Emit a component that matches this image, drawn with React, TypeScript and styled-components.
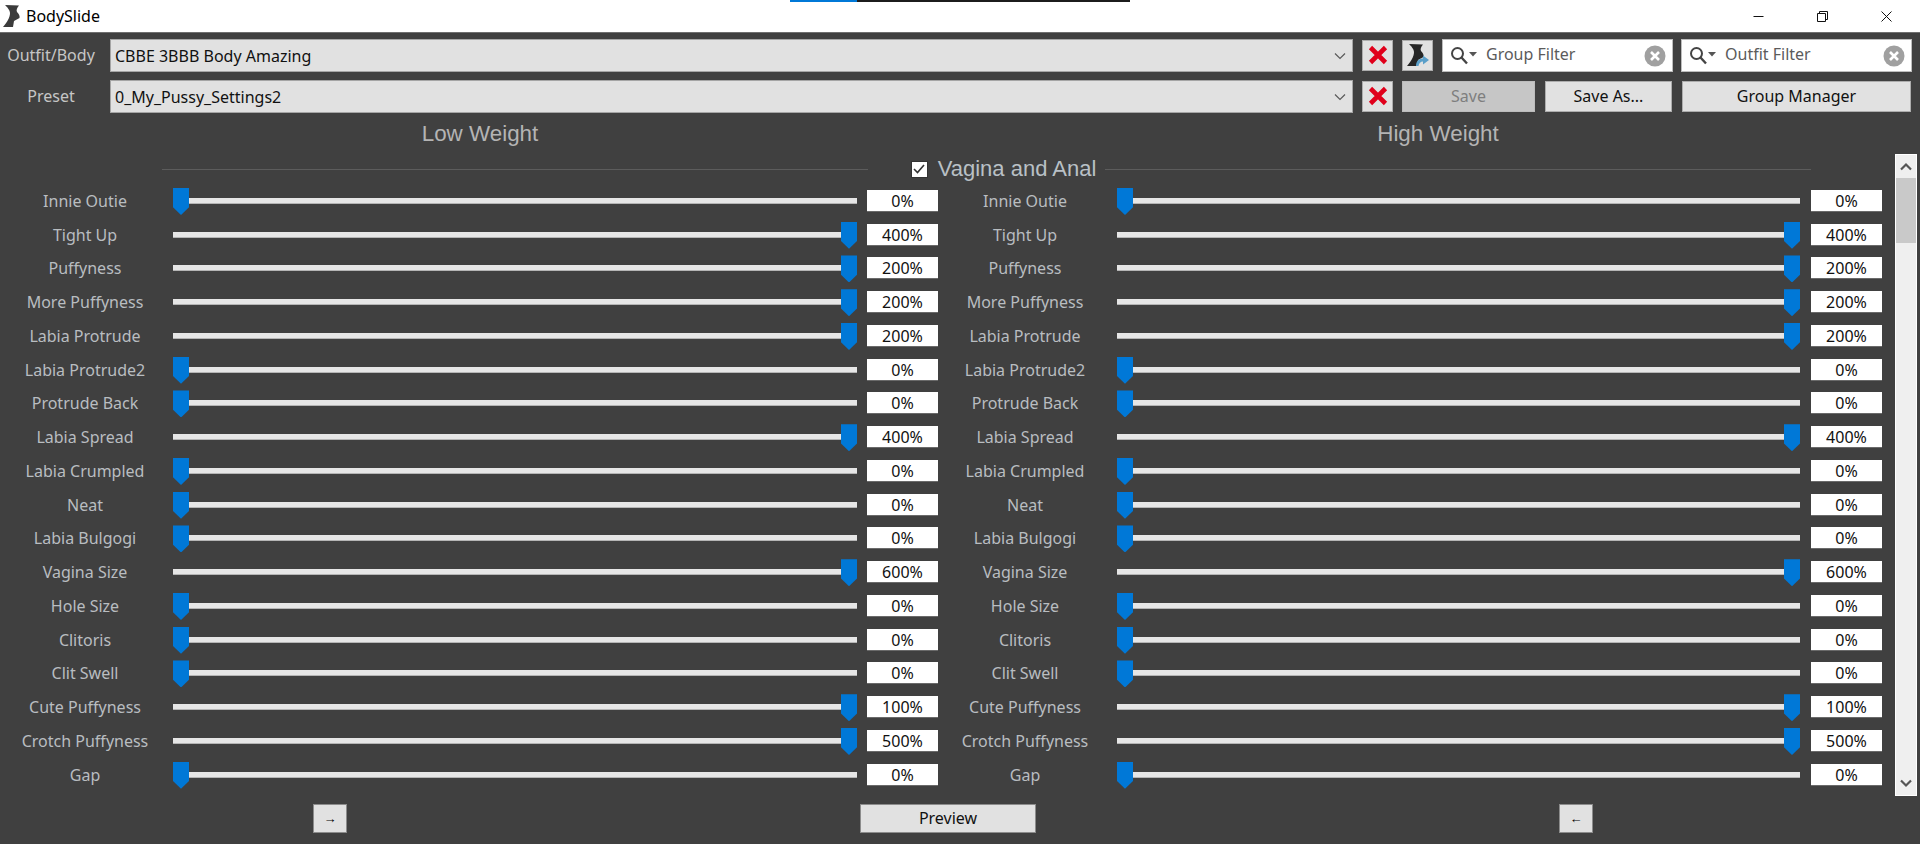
import React from "react";
import styled, { createGlobalStyle } from "styled-components";

const GlobalStyle = createGlobalStyle`
  html, body {
    margin: 0;
    padding: 0;
    background: #404040;
    overflow: hidden;
  }
  body {
    font-family: "Noto Sans", "Liberation Sans", sans-serif;
    font-size: 16px;
  }
`;

const Window = styled.div`
  width: 1920px;
  height: 844px;
  display: flex;
  flex-direction: column;
  background: #404040;
  overflow: hidden;
`;

const TitleBar = styled.div`
  position: relative;
  height: 32px;
  flex: none;
  display: flex;
  align-items: center;
  background: #fff;
  border-bottom: 1px solid #6f6f6f;
  color: #000;
  font-size: 16px;
`;

const TitleIcon = styled.svg`
  flex: none;
`;

const TitleText = styled.span`
  margin-left: 2px;
`;

const TaskStrip = styled.div`
  position: absolute;
  left: 790px;
  top: 0;
  width: 340px;
  height: 2px;
  background: linear-gradient(to right, #0078d7 0 67px, #1c1c1c 67px);
`;

const WindowButtons = styled.div`
  margin-left: auto;
  display: flex;
  margin-right: 2px;
`;

const WindowButton = styled.div`
  width: 64px;
  height: 32px;
  display: flex;
  align-items: center;
  justify-content: center;
`;

const Toolbar = styled.div`
  flex: none;
  display: flex;
  flex-direction: column;
  gap: 8px;
  padding: 6px 9px 0 0;
`;

const ToolRow = styled.div`
  display: flex;
  align-items: center;
  height: 33px;
`;

const FieldLabel = styled.label`
  width: 102px;
  margin-right: 8px;
  text-align: center;
  color: #c6c6c6;
  font-size: 16px;
  line-height: 20px;
  margin-top: -1px;
  flex: none;
`;

const Combo = styled.div`
  width: 1243px;
  height: 33px;
  box-sizing: border-box;
  flex: none;
  display: flex;
  align-items: center;
  justify-content: space-between;
  padding: 1px 6px 0 4px;
  background: #e1e1e1;
  border: 1px solid #a5a5a5;
  color: #111;
  font-size: 16px;
  line-height: 29px;
`;

const Button = styled.button<{ $w: number; $disabled?: boolean; $ml?: number }>`
  width: ${(p) => p.$w}px;
  height: 31px;
  flex: none;
  box-sizing: border-box;
  margin-left: ${(p) => p.$ml ?? 0}px;
  padding: 0 0 1px;
  display: flex;
  align-items: center;
  justify-content: center;
  background: ${(p) => (p.$disabled ? "#c6c6c6" : "#e1e1e1")};
  border: 1px solid ${(p) => (p.$disabled ? "#bcbcbc" : "#adadad")};
  color: ${(p) => (p.$disabled ? "#7e7e7e" : "#111")};
  font-family: inherit;
  font-size: 16px;
`;

const FilterBox = styled.div<{ $ml: number }>`
  width: 231px;
  height: 33px;
  flex: none;
  box-sizing: border-box;
  margin-left: ${(p) => p.$ml}px;
  display: flex;
  align-items: center;
  padding: 0 6px 0 7px;
  background: #fff;
  border: 1px solid #bdbdbd;
  color: #5b5b5b;
  font-size: 16px;
`;

const FilterText = styled.span`
  margin: 0 0 3px 8px;
  flex: 1;
`;

const WeightHeads = styled.div`
  flex: none;
  height: 41px;
  display: grid;
  grid-template-columns: 960px 956px;
  align-items: center;
`;

const WeightHead = styled.div`
  text-align: center;
  color: #b4b4b4;
  font-family: "Liberation Sans", Arial, sans-serif;
  font-size: 22.4px;
`;

const Middle = styled.div`
  flex: none;
  height: 642px;
  display: flex;
`;

const Rows = styled.div`
  width: 1895px;
  flex: none;
`;

const SectionHead = styled.div`
  height: 30px;
  display: flex;
  align-items: center;
  padding: 0 84px 0 162px;
`;

const SectionLine = styled.div`
  flex: 1;
  height: 1px;
  background: #5c5c5c;
`;

const SectionTitle = styled.div`
  display: flex;
  align-items: center;
  margin: 0 9px 0 43px;
  color: #b9c0c6;
  font-family: "Liberation Sans", Arial, sans-serif;
  font-size: 22px;
`;

const CheckBox = styled.span`
  width: 17px;
  height: 17px;
  box-sizing: border-box;
  margin-right: 10px;
  background: #fff;
  border: 1px solid #333;
  display: flex;
  align-items: center;
  justify-content: center;
`;

const SliderRow = styled.div`
  height: 33.76px;
  display: grid;
  grid-template-columns: 170px 687px 81px 174px 688px 82px;
  align-items: center;
`;

const SliderLabel = styled.div`
  text-align: center;
  color: #b9bdc0;
  font-size: 16px;
  line-height: 20px;
  white-space: nowrap;
`;

const Track = styled.div<{ $ml: number }>`
  position: relative;
  margin-left: ${(p) => p.$ml}px;
  height: 6px;
  background: #e6e6e6;
  border-bottom: 1px solid #b5b5b5;
  box-sizing: border-box;
`;

const Thumb = styled.div<{ $max: boolean }>`
  position: absolute;
  top: -10px;
  ${(p) => (p.$max ? "right: 0;" : "left: 0;")}
  width: 16px;
  height: 27px;
  background: #0078d7;
  clip-path: polygon(0 0, 100% 0, 100% 72%, 50% 100%, 0 72%);
`;

const ValueBox = styled.div<{ $ml: number }>`
  height: 22px;
  margin-left: ${(p) => p.$ml}px;
  box-sizing: border-box;
  background: #fff;
  border-bottom: 1px solid #6a6a6a;
  text-align: center;
  line-height: 22px;
  color: #111;
  font-size: 16px;
`;

const Scrollbar = styled.div`
  width: 22px;
  flex: none;
  display: flex;
  flex-direction: column;
  background: #efefef;
  border: 1px solid #fff;
  box-sizing: border-box;
`;

const ScrollArrow = styled.div`
  height: 23px;
  flex: none;
  display: flex;
  align-items: center;
  justify-content: center;
`;

const ScrollThumb = styled.div`
  height: 65px;
  flex: none;
  background: #c9c9c9;
`;

const ScrollRest = styled.div`
  flex: 1;
`;

const Footer = styled.div`
  flex: 1;
  display: grid;
  grid-template-columns: 660px 576px 680px;
  padding-top: 8px;
  justify-items: center;
  align-items: start;
`;

const FooterButton = styled(Button)`
  height: 29px;
  border: 1px solid #8c8c8c;
`;

const ArrowButton = styled(FooterButton)`
  font-family: "Liberation Sans", Arial, sans-serif;
  font-size: 13px;
  color: #000;
`;

type Slider = { name: string; value: number; max: boolean };

const sliders: Slider[] = [
  { name: "Innie Outie", value: 0, max: false },
  { name: "Tight Up", value: 400, max: true },
  { name: "Puffyness", value: 200, max: true },
  { name: "More Puffyness", value: 200, max: true },
  { name: "Labia Protrude", value: 200, max: true },
  { name: "Labia Protrude2", value: 0, max: false },
  { name: "Protrude Back", value: 0, max: false },
  { name: "Labia Spread", value: 400, max: true },
  { name: "Labia Crumpled", value: 0, max: false },
  { name: "Neat", value: 0, max: false },
  { name: "Labia Bulgogi", value: 0, max: false },
  { name: "Vagina Size", value: 600, max: true },
  { name: "Hole Size", value: 0, max: false },
  { name: "Clitoris", value: 0, max: false },
  { name: "Clit Swell", value: 0, max: false },
  { name: "Cute Puffyness", value: 100, max: true },
  { name: "Crotch Puffyness", value: 500, max: true },
  { name: "Gap", value: 0, max: false },
];

const TORSO =
  "M5 5 L19 5.5 C17 8 16 10 17 12 C19 14 20 16 19.5 18 L14 21 L13 27 L3 27 C7 22 10 18 10 13 C10 10 7 7 5 5 Z";

const Chevron = () => (
  <svg width="12" height="8" viewBox="0 0 12 8">
    <path d="M1 1.5 L6 6.5 L11 1.5" fill="none" stroke="#5a5a5a" strokeWidth="1.2" />
  </svg>
);

const RedX = () => (
  <svg width="20" height="20" viewBox="0 0 20 20">
    <path d="M2.5 2.5 L17.5 17.5 M17.5 2.5 L2.5 17.5" stroke="#e0001b" strokeWidth="4.6" />
  </svg>
);

const ConvertIcon = () => (
  <svg width="26" height="26" viewBox="1 3 26 26">
    <path d={TORSO} fill="#262626" />
    <path
      d="M12 27 C12 22 15 19.5 19 19.5 L19 16.5 L25 21 L19 25.5 L19 22.5 C16.5 22.5 15 24 14.5 27 Z"
      fill="#5a9fc9"
    />
  </svg>
);

const SearchIcon = () => (
  <svg width="28" height="20" viewBox="0 0 28 20">
    <circle cx="7.5" cy="7.5" r="5.5" fill="none" stroke="#444" strokeWidth="2" />
    <path d="M11.5 11.5 L17 17.5" stroke="#444" strokeWidth="2.4" />
    <path d="M19 6 L27 6 L23 10.5 Z" fill="#555" />
  </svg>
);

const ClearIcon = () => (
  <svg width="22" height="22" viewBox="0 0 22 22">
    <circle cx="11" cy="11" r="10.5" fill="#a0a0a0" />
    <path d="M7 7 L15 15 M15 7 L7 15" stroke="#fff" strokeWidth="2.6" />
  </svg>
);

const ScrollChevron = ({ up }: { up: boolean }) => (
  <svg width="12" height="9" viewBox="0 0 12 9">
    <path
      d={up ? "M1 7.5 L6 2.5 L11 7.5" : "M1 1.5 L6 6.5 L11 1.5"}
      fill="none"
      stroke="#555"
      strokeWidth="2.2"
    />
  </svg>
);

function SliderCell({ row, ml }: { row: Slider; ml: number }) {
  return (
    <>
      <SliderLabel>{row.name}</SliderLabel>
      <Track $ml={ml}>
        <Thumb $max={row.max} />
      </Track>
    </>
  );
}

function App() {
  return (
    <Window>
      <GlobalStyle />
      <TitleBar>
        <TaskStrip />
        <TitleIcon width="24" height="32" viewBox="0 0 24 32">
          <path d={TORSO} fill="#3b3b3b" />
        </TitleIcon>
        <TitleText>BodySlide</TitleText>
        <WindowButtons>
          <WindowButton>
            <svg width="11" height="11" viewBox="0 0 11 11">
              <path d="M0.5 5.5 H10.5" stroke="#111" />
            </svg>
          </WindowButton>
          <WindowButton>
            <svg width="11" height="11" viewBox="0 0 11 11">
              <path d="M0.5 2.5 H8.5 V10.5 H0.5 Z M2.5 2.5 V0.5 H10.5 V8.5 H8.5" fill="none" stroke="#111" />
            </svg>
          </WindowButton>
          <WindowButton>
            <svg width="11" height="11" viewBox="0 0 11 11">
              <path d="M0.5 0.5 L10.5 10.5 M10.5 0.5 L0.5 10.5" stroke="#111" />
            </svg>
          </WindowButton>
        </WindowButtons>
      </TitleBar>

      <Toolbar>
        <ToolRow>
          <FieldLabel>Outfit/Body</FieldLabel>
          <Combo>
            CBBE 3BBB Body Amazing
            <Chevron />
          </Combo>
          <Button $w={31} $ml={9}>
            <RedX />
          </Button>
          <Button $w={31} $ml={9}>
            <ConvertIcon />
          </Button>
          <FilterBox $ml={9}>
            <SearchIcon />
            <FilterText>Group Filter</FilterText>
            <ClearIcon />
          </FilterBox>
          <FilterBox $ml={8}>
            <SearchIcon />
            <FilterText>Outfit Filter</FilterText>
            <ClearIcon />
          </FilterBox>
        </ToolRow>
        <ToolRow>
          <FieldLabel>Preset</FieldLabel>
          <Combo>
            0_My_Pussy_Settings2
            <Chevron />
          </Combo>
          <Button $w={31} $ml={9}>
            <RedX />
          </Button>
          <Button $w={133} $ml={9} $disabled>
            Save
          </Button>
          <Button $w={127} $ml={10}>
            Save As...
          </Button>
          <Button $w={229} $ml={10}>
            Group Manager
          </Button>
        </ToolRow>
      </Toolbar>

      <WeightHeads>
        <WeightHead>Low Weight</WeightHead>
        <WeightHead>High Weight</WeightHead>
      </WeightHeads>

      <Middle>
        <Rows>
          <SectionHead>
            <SectionLine />
            <SectionTitle>
              <CheckBox>
                <svg width="12" height="10" viewBox="0 0 12 10">
                  <path d="M1 5 L4.5 8.5 L11 1" fill="none" stroke="#333" strokeWidth="1.6" />
                </svg>
              </CheckBox>
              Vagina and Anal
            </SectionTitle>
            <SectionLine />
          </SectionHead>
          {sliders.map((row) => (
            <SliderRow key={row.name}>
              <SliderCell row={row} ml={3} />
              <ValueBox $ml={10}>{row.value}%</ValueBox>
              <SliderCell row={row} ml={5} />
              <ValueBox $ml={11}>{row.value}%</ValueBox>
            </SliderRow>
          ))}
        </Rows>
        <Scrollbar>
          <ScrollArrow>
            <ScrollChevron up />
          </ScrollArrow>
          <ScrollThumb />
          <ScrollRest />
          <ScrollArrow>
            <ScrollChevron up={false} />
          </ScrollArrow>
        </Scrollbar>
      </Middle>

      <Footer>
        <ArrowButton $w={34}>→</ArrowButton>
        <FooterButton $w={176}>Preview</FooterButton>
        <ArrowButton $w={34}>←</ArrowButton>
      </Footer>
    </Window>
  );
}

export default App;
